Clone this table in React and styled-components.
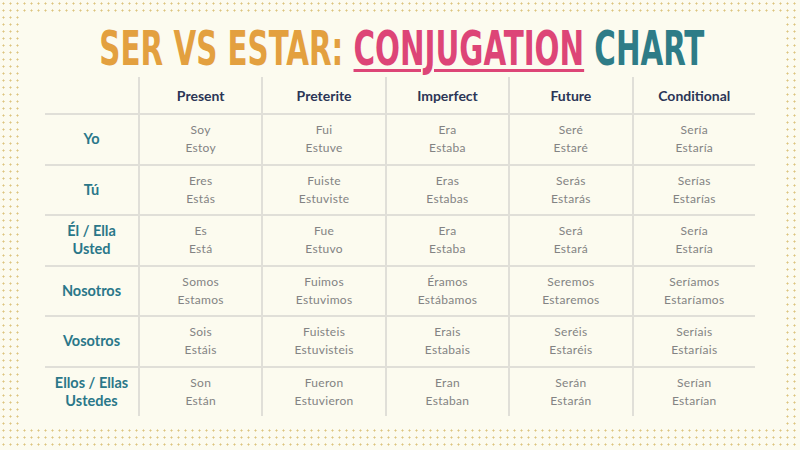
import styled, { createGlobalStyle } from "styled-components";

const GlobalStyle = createGlobalStyle`
    html, body {
        margin: 0;
        padding: 0;
        background: #fcfbef;
    }
`

const Frame = styled.div`
    width: 800px;
    height: 450px;
    box-sizing: border-box;
    padding: 16px 18px 22px 22px;
    background-color: #fcfbef;
    background-image: radial-gradient(circle, #dcc47e 0.8px, transparent 1.3px);
    background-size: 7px 7px;
    background-position: 0 0;
    display: flex;
`

const Panel = styled.div`
    flex: 1;
    min-width: 0;
    overflow: hidden;
    background: #fcfbef;
    display: flex;
    flex-direction: column;
    padding-top: 8px;
`

const TitleRow = styled.div`
    display: flex;
    justify-content: center;
    height: 48px;
`

const Title = styled.h1`
    flex: none;
    margin: 0;
    font-family: 'DejaVu Sans Condensed', 'DejaVu Sans', sans-serif;
    font-weight: 700;
    font-size: 48px;
    line-height: 48px;
    white-space: nowrap;
    transform: scaleX(0.68);
    transform-origin: center;
`

const Word = styled.span`
    color: ${p => p.color};
    text-decoration: ${p => p.underline ? 'underline' : 'none'};
    text-decoration-thickness: 3px;
    text-underline-offset: 4px;
`

const Table = styled.div`
    display: grid;
    grid-template-columns: 93px repeat(5, 1fr);
    grid-template-rows: 36px repeat(6, 50.5px);
    width: 710px;
    margin: 5px 0 0 23px;
`

const Cell = styled.div`
    box-sizing: border-box;
    display: flex;
    flex-direction: column;
    align-items: center;
    justify-content: center;
    text-align: center;
    border-left: ${p => p.first ? 'none' : '2px solid #e0dfd8'};
    border-top: ${p => p.head ? 'none' : '2px solid #e0dfd8'};
`

const HeadText = styled.span`
    font-family: 'Lato', sans-serif;
    font-weight: 700;
    font-size: 14px;
    color: #2b3556;
`

const Label = styled.span`
    font-family: 'Lato', sans-serif;
    font-weight: 700;
    font-size: 14.5px;
    line-height: 18px;
    color: #2a7789;
`

const Form = styled.span`
    font-family: 'Lato', sans-serif;
    font-size: 12px;
    line-height: 18px;
    letter-spacing: 0.3px;
    color: #838383;
`

const tenses = ["Present", "Preterite", "Imperfect", "Future", "Conditional"]

const rows = [
    { who: ["Yo"], forms: [["Soy", "Estoy"], ["Fui", "Estuve"], ["Era", "Estaba"], ["Seré", "Estaré"], ["Sería", "Estaría"]] },
    { who: ["Tú"], forms: [["Eres", "Estás"], ["Fuiste", "Estuviste"], ["Eras", "Estabas"], ["Serás", "Estarás"], ["Serías", "Estarías"]] },
    { who: ["Él / Ella", "Usted"], forms: [["Es", "Está"], ["Fue", "Estuvo"], ["Era", "Estaba"], ["Será", "Estará"], ["Sería", "Estaría"]] },
    { who: ["Nosotros"], forms: [["Somos", "Estamos"], ["Fuimos", "Estuvimos"], ["Éramos", "Estábamos"], ["Seremos", "Estaremos"], ["Seríamos", "Estaríamos"]] },
    { who: ["Vosotros"], forms: [["Sois", "Estáis"], ["Fuisteis", "Estuvisteis"], ["Erais", "Estabais"], ["Seréis", "Estaréis"], ["Seríais", "Estaríais"]] },
    { who: ["Ellos / Ellas", "Ustedes"], forms: [["Son", "Están"], ["Fueron", "Estuvieron"], ["Eran", "Estaban"], ["Serán", "Estarán"], ["Serían", "Estarían"]] },
]

function App() {
    return <>
        <GlobalStyle />
        <Frame>
            <Panel>
                <TitleRow>
                    <Title>
                        <Word color="#e3a03f">SER VS ESTAR: </Word>
                        <Word color="#dd4577" underline>CONJUGATION</Word>
                        <Word color="#2e7c87"> CHART</Word>
                    </Title>
                </TitleRow>
                <Table>
                    <Cell head first />
                    {tenses.map(t => <Cell head key={t}><HeadText>{t}</HeadText></Cell>)}
                    {rows.map(r => <>
                        <Cell first key={r.who[0]}>
                            {r.who.map(w => <Label key={w}>{w}</Label>)}
                        </Cell>
                        {r.forms.map((f, i) => <Cell key={r.who[0] + i}>
                            <Form>{f[0]}</Form>
                            <Form>{f[1]}</Form>
                        </Cell>)}
                    </>)}
                </Table>
            </Panel>
        </Frame>
    </>
}

export default App
